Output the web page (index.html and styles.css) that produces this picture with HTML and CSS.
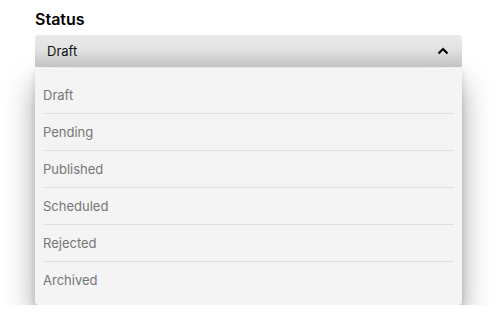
FILE: index.html
```html
<!DOCTYPE html>
<html lang="en">
<head>
    <meta charset="UTF-8">
    <meta name="viewport" content="width=device-width, initial-scale=1.0">
    <title>Status</title>
    <link rel="stylesheet" href="styles.css">
</head>
<body>
    <div class="field">
        <label class="field-label">Status</label>
        <div class="select">
            <div class="select-trigger">
                <span>Draft</span>
                <svg class="chevron" width="12" height="8" viewBox="0 0 12 8">
                    <path d="M1.5 6.5 L6 2 L10.5 6.5" fill="none" stroke="#000" stroke-width="2.2"/>
                </svg>
            </div>
            <ul class="select-menu">
                <li>Draft</li>
                <li>Pending</li>
                <li>Published</li>
                <li>Scheduled</li>
                <li>Rejected</li>
                <li>Archived</li>
            </ul>
        </div>
    </div>
</body>
</html>
```

FILE: styles.css
```css
body {
    margin: 0;
    font-family: Inter, "Noto Sans", Arial, sans-serif;
    background: #fff;
}
.field {
    width: 427px;
    padding: 8px 0 0 35px;
}
.field-label {
    display: block;
    font-size: 16px;
    font-weight: 600;
    color: #000;
    margin-bottom: 5px;
    line-height: 22px;
}
.select {
    position: relative;
}
.select-trigger {
    display: flex;
    align-items: center;
    justify-content: space-between;
    height: 32px;
    padding: 0 13px 0 12px;
    border-radius: 4px 4px 0 0;
    background: linear-gradient(to bottom, #e9e9e9 0%, #e2e2e2 45%, #c3c3c3 100%);
    font-size: 13px;
    color: #111;
    position: relative;
    z-index: 2;
}
.chevron {
    display: block;
}
.select-menu {
    list-style: none;
    margin: 1px 0 0;
    padding: 9px 8px 7px;
    background: #f4f4f4;
    border-radius: 4px;
    box-shadow: 0 16px 30px rgba(0, 0, 0, 0.36), 0 2px 6px rgba(0, 0, 0, 0.14);
    position: relative;
    z-index: 1;
}
.select-menu li {
    height: 36px;
    line-height: 36px;
    font-size: 13px;
    color: #767676;
    border-bottom: 1px solid #dedede;
}
.select-menu li:last-child {
    border-bottom: none;
}
```
